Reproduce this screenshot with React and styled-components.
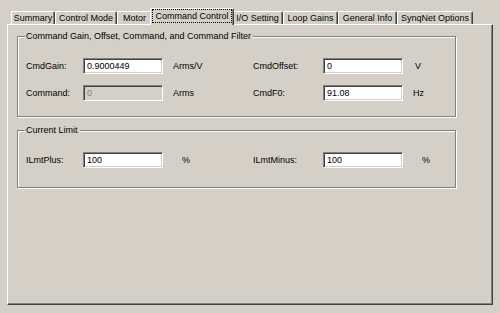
import styled, { createGlobalStyle } from 'styled-components';

const Global = createGlobalStyle`
  body {
    margin: 0;
    background: #d4d0c8;
    font-family: "Liberation Sans", Arial, sans-serif;
    font-size: 9px;
    color: #000;
  }
`;

const Page = styled.div`
  width: 500px;
  height: 313px;
  box-sizing: border-box;
  padding: 8px 7px 0 7px;
`;

const TabStrip = styled.div`
  display: flex;
  align-items: flex-end;
  height: 16px;
  padding-left: 4px;
  position: relative;
  z-index: 1;
`;

const Tab = styled.div`
  box-sizing: border-box;
  flex: none;
  width: ${({ w }) => w}px;
  height: ${({ active }) => (active ? 17 : 13)}px;
  margin: 0 ${({ active }) => (active ? -2 : 0)}px ${({ active }) => (active ? -1 : 0)}px;
  z-index: ${({ active }) => (active ? 2 : 0)};
  border-top: 1px solid #fff;
  border-left: 1px solid #fff;
  border-right: 1px solid #404040;
  box-shadow: inset -1px 0 0 #808080;
  border-radius: 2px 2px 0 0;
  background: #d4d0c8;
  display: flex;
  align-items: center;
  justify-content: center;
  padding-bottom: ${({ active }) => (active ? 2 : 0)}px;
  white-space: nowrap;
`;

const Focus = styled.span`
  outline: 1px dotted #000;
  outline-offset: 0;
  padding: 1px 2px;
  line-height: 10px;
`;

const Panel = styled.div`
  box-sizing: border-box;
  width: 486px;
  height: 281px;
  border-top: 1px solid #fff;
  border-left: 1px solid #fff;
  border-right: 1px solid #404040;
  border-bottom: 1px solid #404040;
  box-shadow: inset -1px -1px 0 #808080;
  padding: 11px 0 0 9px;
  display: flex;
  flex-direction: column;
  gap: 13px;
`;

const Group = styled.div`
  position: relative;
  box-sizing: border-box;
  width: 439px;
  height: ${({ h }) => h}px;
  border: 1px solid #808080;
  box-shadow: inset 1px 1px 0 #fff, 1px 1px 0 #fff;
  padding: 21px 0 0 8px;
`;

const Legend = styled.span`
  position: absolute;
  top: -7px;
  left: 7px;
  padding: 0 2px 0 1px;
  background: #d4d0c8;
  line-height: 12px;
`;

const FieldGrid = styled.div`
  display: grid;
  grid-template-columns: 57px 80px 90px 70px 80px 1fr;
  grid-auto-rows: 16px;
  row-gap: 11px;
  align-items: center;
`;

const Label = styled.span`
  white-space: nowrap;
`;

const Unit = styled.span`
  padding-left: ${({ pad }) => pad}px;
  white-space: nowrap;
`;

const Field = styled.input`
  box-sizing: border-box;
  width: 80px;
  height: 16px;
  margin: 0;
  padding: 0 0 0 3px;
  font: inherit;
  color: #000;
  border-style: solid;
  border-width: 1px;
  border-color: #808080 #fff #fff #808080;
  box-shadow: inset 1px 1px 0 #404040, inset -1px -1px 0 #d4d0c8;
  background: #fff;
  outline: none;

  &:disabled {
    background: #d4d0c8;
    color: #808080;
    -webkit-text-fill-color: #808080;
    opacity: 1;
  }
`;

const tabs = [
  ['Summary', 44],
  ['Control Mode', 62],
  ['Motor', 35],
  ['Command Control', 84, true],
  ['I/O Setting', 51],
  ['Loop Gains', 55],
  ['General Info', 59],
  ['SynqNet Options', 76],
];

function App() {
  return (
    <>
      <Global />
      <Page>
        <TabStrip>
          {tabs.map(([name, w, active]) => (
            <Tab key={name} w={w} active={active}>
              {active ? <Focus>{name}</Focus> : name}
            </Tab>
          ))}
        </TabStrip>
        <Panel>
          <Group h={81}>
            <Legend>Command Gain, Offset, Command, and Command Filter</Legend>
            <FieldGrid>
              <Label>CmdGain:</Label>
              <Field defaultValue="0.9000449" />
              <Unit pad={10}>Arms/V</Unit>
              <Label>CmdOffset:</Label>
              <Field defaultValue="0" />
              <Unit pad={12}>V</Unit>

              <Label>Command:</Label>
              <Field defaultValue="0" disabled />
              <Unit pad={10}>Arms</Unit>
              <Label>CmdF0:</Label>
              <Field defaultValue="91.08" />
              <Unit pad={10}>Hz</Unit>
            </FieldGrid>
          </Group>
          <Group h={58}>
            <Legend>Current Limit</Legend>
            <FieldGrid>
              <Label>ILmtPlus:</Label>
              <Field defaultValue="100" />
              <Unit pad={19}>%</Unit>
              <Label>ILmtMinus:</Label>
              <Field defaultValue="100" />
              <Unit pad={19}>%</Unit>
            </FieldGrid>
          </Group>
        </Panel>
      </Page>
    </>
  );
}

export default App;
